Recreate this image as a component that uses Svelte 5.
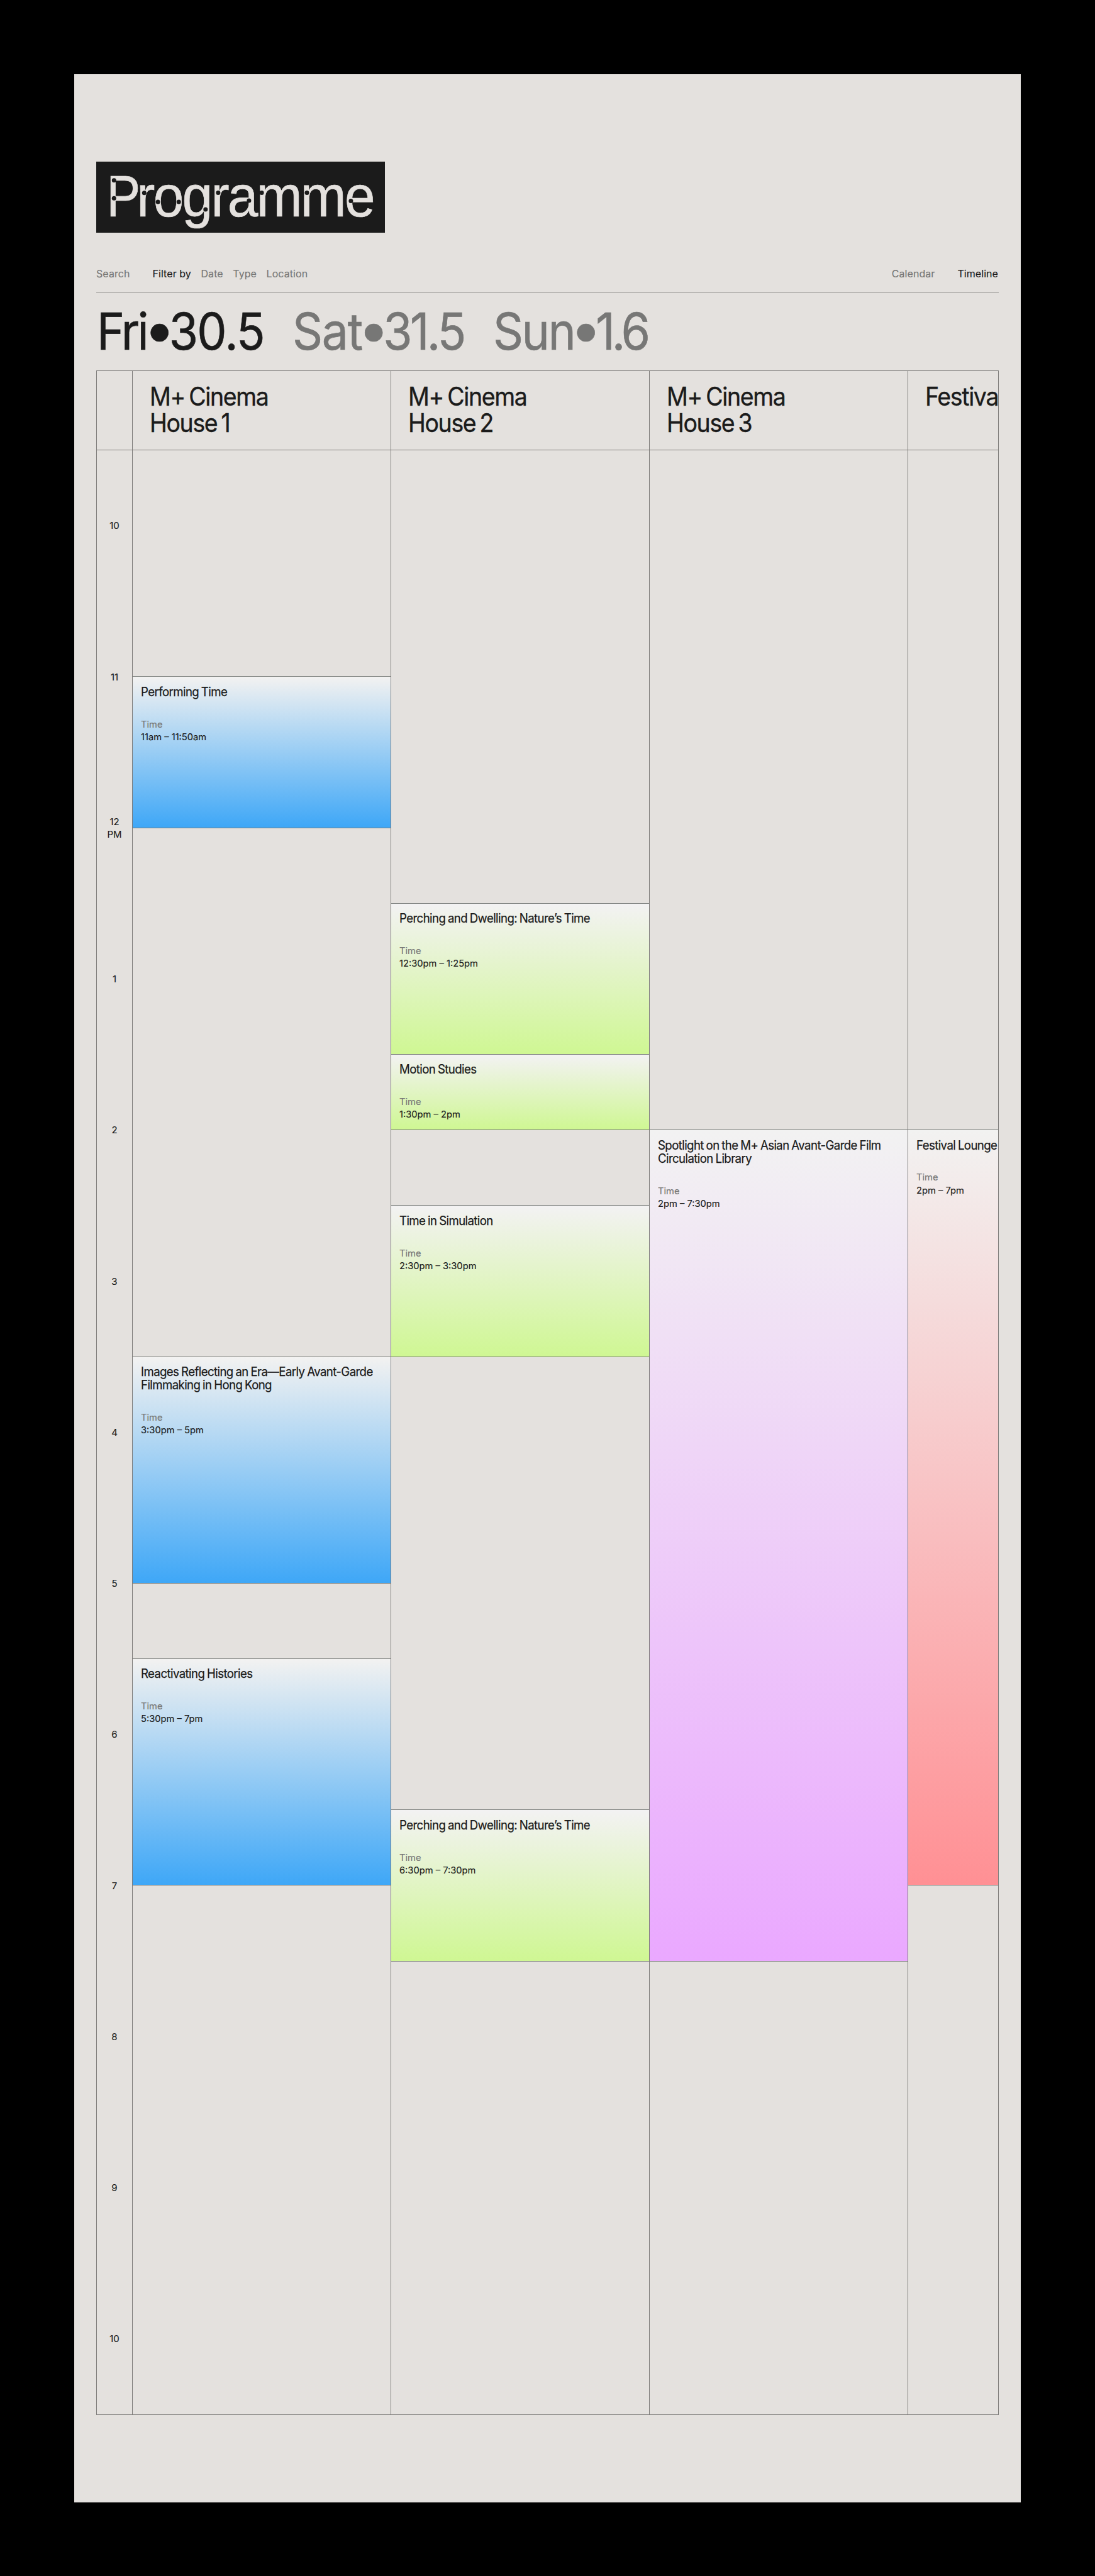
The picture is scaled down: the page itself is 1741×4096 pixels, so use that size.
<script lang="ts">
  type Tone = 'blue' | 'green' | 'violet' | 'red'

  interface Screening {
    title: string
    time: string
    start: number
    end: number
    tone: Tone
  }

  interface Venue {
    name: string
    screenings: Screening[]
  }

  const OPENING = 9.5

  const filters = ['Date', 'Type', 'Location']

  const days = [
    { day: 'Fri', date: '30.5', active: true },
    { day: 'Sat', date: '31.5', active: false },
    { day: 'Sun', date: '1.6', active: false },
  ]

  const hours = ['10', '11', '12\nPM', '1', '2', '3', '4', '5', '6', '7', '8', '9', '10']

  const venues: Venue[] = [
    {
      name: 'M+ Cinema\nHouse 1',
      screenings: [
        { title: 'Performing Time', time: '11am – 11:50am', start: 11, end: 12, tone: 'blue' },
        {
          title: 'Images Reflecting an Era—Early Avant-Garde\nFilmmaking in Hong Kong',
          time: '3:30pm – 5pm',
          start: 15.5,
          end: 17,
          tone: 'blue',
        },
        { title: 'Reactivating Histories', time: '5:30pm – 7pm', start: 17.5, end: 19, tone: 'blue' },
      ],
    },
    {
      name: 'M+ Cinema\nHouse 2',
      screenings: [
        { title: 'Perching and Dwelling: Nature’s Time', time: '12:30pm – 1:25pm', start: 12.5, end: 13.5, tone: 'green' },
        { title: 'Motion Studies', time: '1:30pm – 2pm', start: 13.5, end: 14, tone: 'green' },
        { title: 'Time in Simulation', time: '2:30pm – 3:30pm', start: 14.5, end: 15.5, tone: 'green' },
        { title: 'Perching and Dwelling: Nature’s Time', time: '6:30pm – 7:30pm', start: 18.5, end: 19.5, tone: 'green' },
      ],
    },
    {
      name: 'M+ Cinema\nHouse 3',
      screenings: [
        {
          title: 'Spotlight on the M+ Asian Avant-Garde Film\nCirculation Library',
          time: '2pm – 7:30pm',
          start: 14,
          end: 19.5,
          tone: 'violet',
        },
      ],
    },
    {
      name: 'Festival',
      screenings: [{ title: 'Festival Lounge', time: '2pm – 7pm', start: 14, end: 19, tone: 'red' }],
    },
  ]

  // ink traps cut into the headline letters
  const notches = [
    [28.3, 29.7],
    [28.3, 58.3],
    [76.3, 49.8],
    [98.1, 64],
    [131.2, 64],
    [173.8, 76.1],
    [193.9, 49.5],
    [242.9, 61.9],
    [263.1, 49.5],
    [335, 49.5],
    [404.9, 62.4],
  ]

  // half-hour grid line for a time of day
  function row(time: number): number {
    return (time - OPENING) * 2 + 1
  }
</script>

<div class="page">
  <h1 class="title">
    <span class="title__text"><span class="title__cap">P</span>rogramme</span>
    <svg class="title__notches" viewBox="0 0 459 113" aria-hidden="true">
      {#each notches as [x, y]}
        <circle cx={x} cy={y} r="3.5" />
      {/each}
    </svg>
  </h1>

  <nav class="toolbar">
    <a href="#search">Search</a>
    <div class="toolbar__filters">
      <span class="is-active">Filter by</span>
      {#each filters as filter}
        <a href="#filter">{filter}</a>
      {/each}
    </div>
    <div class="toolbar__views">
      <a href="#calendar">Calendar</a>
      <a class="is-active" href="#timeline">Timeline</a>
    </div>
  </nav>

  <div class="days">
    {#each days as d}
      <div class="day day--{d.day.toLowerCase()}" class:day--active={d.active}>
        <span class="day__name">{d.day}</span><span class="day__dot">•</span><span class="day__date">{d.date}</span>
      </div>
    {/each}
  </div>

  <section class="timeline">
    <div class="timeline__head">
      <div class="timeline__corner"></div>
      {#each venues as venue}
        <div class="venue"><h2>{venue.name}</h2></div>
      {/each}
    </div>

    <div class="timeline__body">
      <div class="hours">
        {#each hours as hour}
          <div class="hour">{hour}</div>
        {/each}
      </div>
      {#each venues as venue}
        <div class="column">
          {#each venue.screenings as s}
            <article class="event event--{s.tone}" style="grid-row: {row(s.start)} / {row(s.end)}">
              <h3>{s.title}</h3>
              <p class="event__label">Time</p>
              <p>{s.time}</p>
            </article>
          {/each}
        </div>
      {/each}
    </div>
  </section>
</div>

<style>
  :global(body) {
    margin: 0;
    background: #000;
  }

  .page {
    --ink: #1b1b1b;
    --paper: #e4e1de;
    --muted: #777776;
    --line: #7d7b79;

    box-sizing: border-box;
    width: 1505px;
    height: 3861px;
    margin: 118px 0 117px 118px;
    padding: 139px 35px 0;
    background: var(--paper);
    color: var(--ink);
    font-family: Inter, 'Liberation Sans', sans-serif;
    -webkit-text-stroke: 0.15px currentColor;
  }

  h1,
  h2,
  h3,
  p {
    margin: 0;
    font-weight: 400;
  }

  a {
    color: inherit;
    text-decoration: none;
  }

  .title {
    position: relative;
    box-sizing: border-box;
    width: 459px;
    height: 113px;
    padding-left: 15.5px;
    background: var(--ink);
    color: var(--paper);
    font-family: 'Liberation Sans', Arial, sans-serif;
    font-size: 92px;
    line-height: 111px;
    letter-spacing: -0.031em;
    white-space: nowrap;
  }

  .title__text {
    display: inline-block;
    transform: scaleX(0.95);
    transform-origin: left;
    -webkit-text-stroke: 0.7px currentColor;
  }

  .title__cap {
    display: inline-block;
    letter-spacing: -0.115em;
    transform: scaleX(0.92);
    transform-origin: 7px 0;
  }

  .title__notches {
    position: absolute;
    inset: 0;
    fill: var(--ink);
  }

  .toolbar {
    display: flex;
    gap: 36px;
    padding: 54.5px 1px 19.5px 0;
    border-bottom: 1px solid var(--line);
    color: var(--muted);
    font-size: 16px;
    line-height: 20px;
    letter-spacing: 0.004em;
    white-space: nowrap;
  }

  .toolbar__filters {
    display: flex;
    gap: 15.6px;
  }

  .toolbar__views {
    display: flex;
    gap: 36px;
    margin-left: auto;
  }

  .is-active {
    color: var(--ink);
  }

  .days {
    display: grid;
    grid-template-columns: 334.4px 343px auto;
    height: 124px;
    margin-left: 0.5px;
    color: var(--muted);
    font-size: 80.7px;
    line-height: 124px;
    white-space: nowrap;
    transform: scaleX(0.93);
    transform-origin: left;
    -webkit-text-stroke: 0.6px currentColor;
  }

  .day--active {
    color: var(--ink);
  }

  .day__dot {
    display: inline-block;
    margin: 0 -8.7px 0 -6px;
    font-size: 89.5px;
    line-height: 1;
    transform: translateY(-1.5px) scaleX(1.075);
  }

  /* optical tracking, the pairs differ per weekday and date */
  .day--fri .day__name {
    letter-spacing: -0.046em;
  }

  .day--fri .day__dot {
    margin-left: -3.7px;
  }

  .day--fri .day__date {
    letter-spacing: -0.022em;
  }

  .day--sat .day__name {
    letter-spacing: -0.017em;
  }

  .day--sat .day__date {
    letter-spacing: -0.048em;
  }

  .day--sun .day__name {
    letter-spacing: -0.034em;
  }

  .day--sun .day__dot {
    margin-left: -5px;
  }

  .day--sun .day__date {
    letter-spacing: -0.067em;
  }

  .timeline {
    border: 1px solid var(--line);
    overflow: hidden;
  }

  .timeline__head,
  .timeline__body {
    display: grid;
    grid-template-columns: 57px repeat(4, 411px);
  }

  .timeline__head {
    height: 125px;
    border-bottom: 1px solid var(--line);
  }

  .timeline__corner,
  .venue,
  .hours,
  .column {
    border-right: 1px solid var(--line);
  }

  .venue {
    padding: 20px 0 0 27px;
  }

  .venue h2 {
    font-size: 40.3px;
    line-height: 41.6px;
    letter-spacing: -0.036em;
    word-spacing: -0.08em;
    white-space: pre-line;
    transform: scaleX(0.93);
    transform-origin: left;
    -webkit-text-stroke: 0.4px currentColor;
  }

  .hours {
    display: grid;
    grid-template-rows: repeat(13, 240.25px);
  }

  .hour {
    align-self: center;
    font-size: 15px;
    line-height: 19.5px;
    text-align: center;
    white-space: pre-line;
  }

  .column {
    display: grid;
    grid-template-rows: repeat(26, 120.125px);
  }

  .event {
    margin-top: -1px;
    padding: 13.4px 0 0 13px;
    border: solid #777b78;
    border-width: 1px 0;
    font-size: 14.7px;
    line-height: 20.2px;
  }

  .event h3 {
    margin-bottom: 30.8px;
    font-size: 20px;
    line-height: 21.1px;
    letter-spacing: -0.031em;
    word-spacing: -0.05em;
    white-space: pre;
    transform: scaleX(0.93);
    transform-origin: left;
    -webkit-text-stroke: 0.25px currentColor;
  }

  .event__label {
    color: var(--muted);
  }

  .event--blue {
    background: linear-gradient(#f3f2f1, #3ea7f7);
  }

  .event--green {
    background: linear-gradient(#f3f2f3, #cff793);
  }

  .event--violet {
    background: linear-gradient(#f2f2f2, #eaa8ff);
  }

  .event--red {
    background: linear-gradient(#f2f2f1, #ff9094);
  }
</style>
